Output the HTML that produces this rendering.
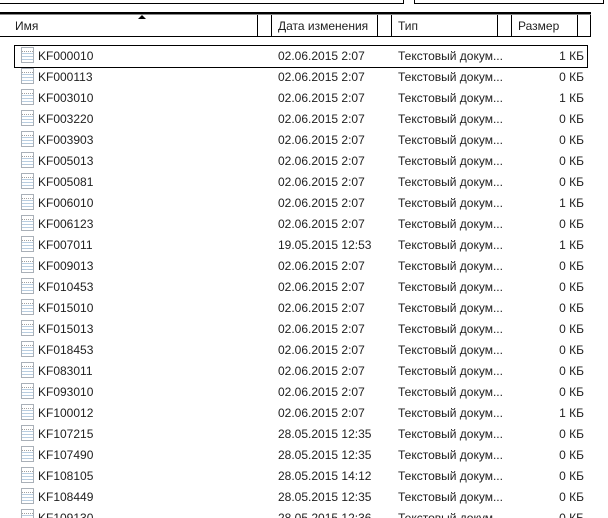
<!DOCTYPE html>
<html><head><meta charset="utf-8"><style>
html,body{margin:0;padding:0;background:#fff;width:608px;height:518px;overflow:hidden;position:relative;font-family:"Liberation Sans","DejaVu Sans",sans-serif;font-size:12px;color:#000}
.a{position:absolute}
.h{position:absolute;top:19px;font-size:12px;color:#1e1e1e}
.r{position:absolute;left:0;width:608px;height:21px;line-height:21px;color:#1e1e1e}
.r span{position:absolute;top:1px;white-space:nowrap}
.ic{position:absolute;left:21px;top:2px;width:11px;height:14px;border:1px solid #a9b0b8;background:repeating-linear-gradient(#fff 0 2px,#b8cde0 2px 3px);}
.ic:before{content:"";position:absolute;left:0;right:0;top:0;height:3px;background:#fff;border-bottom:1px dotted #a0a0a0}
</style></head><body>
<div class="a" style="left:0;top:0;width:403px;height:3px;border-right:1px solid #000;border-bottom:1px solid #000"></div>
<div class="a" style="left:414px;top:0;width:188px;height:3px;border-left:1px solid #000;border-right:1px solid #000;border-bottom:1px solid #000"></div>
<div class="a" style="left:0;top:12px;width:591px;height:2px;background:#000"></div>
<div class="a" style="left:0;top:14px;width:591px;height:1px;background:#888"></div>
<div class="a" style="left:0;top:36px;width:591px;height:1px;background:#000"></div>
<div class="a" style="left:138px;top:15px;width:0;height:0;border-left:4px solid transparent;border-right:4px solid transparent;border-bottom:4px solid #000"></div>
<div class="a" style="left:257px;top:15px;width:1px;height:21px;background:#000"></div>
<div class="a" style="left:271px;top:15px;width:1px;height:21px;background:#000"></div>
<div class="a" style="left:377px;top:15px;width:1px;height:21px;background:#000"></div>
<div class="a" style="left:391px;top:15px;width:1px;height:21px;background:#000"></div>
<div class="a" style="left:497px;top:15px;width:1px;height:21px;background:#000"></div>
<div class="a" style="left:511px;top:15px;width:1px;height:21px;background:#000"></div>
<div class="a" style="left:577px;top:15px;width:1px;height:21px;background:#000"></div>
<div class="a" style="left:590px;top:15px;width:1px;height:21px;background:#000"></div>
<div class="h" style="left:15px">Имя</div>
<div class="h" style="left:278px">Дата изменения</div>
<div class="h" style="left:398px">Тип</div>
<div class="h" style="left:518px">Размер</div>
<div class="a" style="left:14px;top:45px;width:572px;height:21px;border:1px solid #000"></div>
<div id="rows"></div>
<script>
var d=[["KF000010","02.06.2015 2:07","1"],["KF000113","02.06.2015 2:07","0"],["KF003010","02.06.2015 2:07","1"],["KF003220","02.06.2015 2:07","0"],["KF003903","02.06.2015 2:07","0"],["KF005013","02.06.2015 2:07","0"],["KF005081","02.06.2015 2:07","0"],["KF006010","02.06.2015 2:07","1"],["KF006123","02.06.2015 2:07","0"],["KF007011","19.05.2015 12:53","1"],["KF009013","02.06.2015 2:07","0"],["KF010453","02.06.2015 2:07","0"],["KF015010","02.06.2015 2:07","0"],["KF015013","02.06.2015 2:07","0"],["KF018453","02.06.2015 2:07","0"],["KF083011","02.06.2015 2:07","0"],["KF093010","02.06.2015 2:07","0"],["KF100012","02.06.2015 2:07","1"],["KF107215","28.05.2015 12:35","0"],["KF107490","28.05.2015 12:35","0"],["KF108105","28.05.2015 14:12","0"],["KF108449","28.05.2015 12:35","0"],["KF109130","28.05.2015 12:36","0"]];
var h="";for(var i=0;i<d.length;i++){var t=45+21*i;h+='<div class="r" style="top:'+t+'px"><div class="ic"></div><span style="left:38px">'+d[i][0]+'</span><span style="left:278px">'+d[i][1]+'</span><span style="left:398px">Текстовый докум...</span><span style="right:24px">'+d[i][2]+' КБ</span></div>';}
document.getElementById("rows").innerHTML=h;
</script>
</body></html>
